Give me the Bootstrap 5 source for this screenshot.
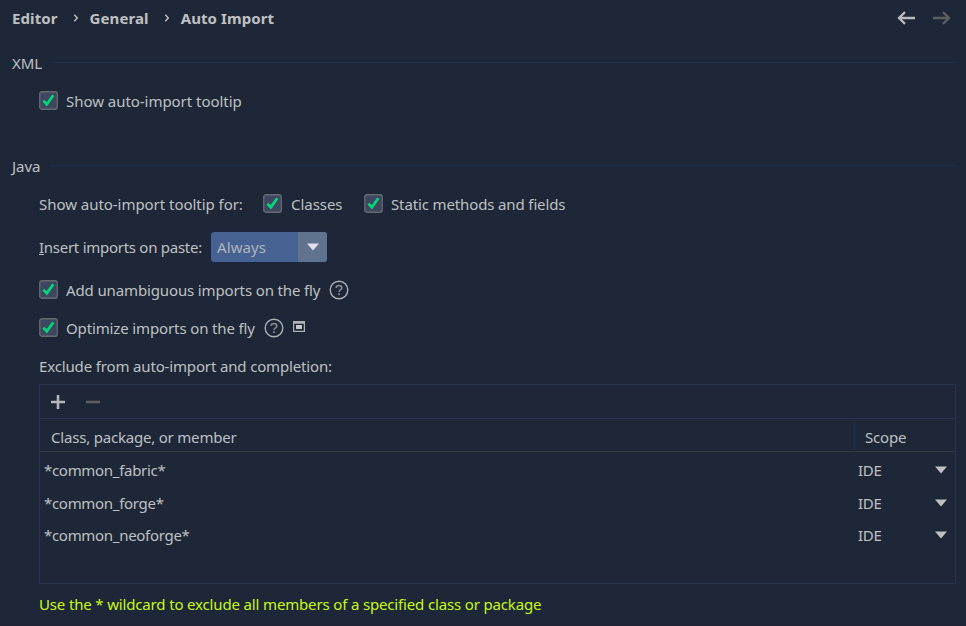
<!DOCTYPE html>
<html lang="en">
<head>
<meta charset="utf-8">
<meta name="viewport" content="width=device-width, initial-scale=1">
<title>Auto Import</title>
<link href="https://cdn.jsdelivr.net/npm/bootstrap@5.3.0/dist/css/bootstrap.min.css" rel="stylesheet">
<style>
body{background:#1e2738;color:#bfc0c1;font:15px/22px "Noto Sans","Open Sans",sans-serif;letter-spacing:-.13px;height:626px;overflow:hidden;border-bottom:1px solid #1b2132}
svg{display:block;flex:none}
.crumbs{height:36px;padding:0 15px 0 12px;font-weight:700;letter-spacing:.1px}
.crumbs .sep{margin:0 11px 0 15px}
.crumbs .fwd{margin-left:18px;color:#5d5e61}
.crumbs .back{color:#b9babb}
.section-title{height:22px;margin-top:16px;padding:0 10px 0 12px}
.section-title .rule{height:1px;background:#1d304c;margin-top:-2px}
.second{margin-top:43px}
.indent{margin:16px 0 0 39px;height:22px;white-space:nowrap}
.wide{letter-spacing:-.04px}
.tight{letter-spacing:-.27px}
.tick{width:19px;height:19px;margin:-2px 8px 0 0}
.combo{width:118px;height:32px;border:1px solid #1a2542;border-radius:4px;background:#466292;margin:-1px 0 0 7px;overflow:hidden;color:#b0b4ba}
.combo .arrow{width:29px;height:30px;background:#60738e}
.members{margin:7px 10px 0 39px;height:200px;border:1px solid #27344f}
.tools{height:34px;border-bottom:1px solid #27344f;padding-left:11px}
.heads{height:33px;border-bottom:1px solid #303842;padding-top:3px;letter-spacing:-.2px}
.heads .first{padding:4px 0 0 11px}
.heads .scope{width:101px;border-left:1px solid #1d304c;padding:5px 0 0 10px;height:28px;line-height:20px}
.entry{height:32.5px;padding:4px 8px 0 4px;letter-spacing:-.3px}
.entry .scope{width:77px}
.hint{color:#c8fa14;margin-top:9px;letter-spacing:-.155px}
</style>
<script src="https://cdn.jsdelivr.net/npm/bootstrap@5.3.0/dist/js/bootstrap.bundle.min.js"></script>
</head>
<body>
<svg width="0" height="0" class="position-absolute">
<symbol id="check" viewBox="0 0 19 19"><rect x=".75" y=".75" width="17.5" height="17.5" rx="2" fill="#3d475f" stroke="#666a70" stroke-width="1.3"/><path d="M4.4 9.6 7.8 13.3 14.3 4.3" fill="none" stroke="#00d97a" stroke-width="2.7"/></symbol>
<symbol id="help" viewBox="0 0 20 20"><circle cx="10" cy="10" r="8.8" fill="none" stroke="#aeb0b4" stroke-width="1.4"/><path d="M7.2 8C7.2 4.7 12.8 4.8 12.8 7.9 12.8 9.8 10 9.8 10 12" fill="none" stroke="#888b91" stroke-width="1.6"/><path d="M9.1 13.3h1.8v1.7H9.1z" fill="#888b91"/></symbol>
<symbol id="chev" viewBox="0 0 6 10"><path d="M1.3 1.7 4.3 5 1.3 8.3" fill="none" stroke="#bfc0c1" stroke-width="1.4"/></symbol>
<symbol id="down" viewBox="0 0 12 8"><path d="M0 .5h12L6 7.5z" fill="currentColor"/></symbol>
<symbol id="arrow" viewBox="0 0 18 14"><path d="M18 7H2M8 1.2 2 7l6 5.8" fill="none" stroke="currentColor" stroke-width="2.3"/></symbol>
</svg>
<header class="crumbs d-flex align-items-center">
<span>Editor</span><svg class="sep" width="6" height="10"><use href="#chev"/></svg><span>General</span><svg class="sep" width="6" height="10"><use href="#chev"/></svg><span>Auto Import</span>
<svg class="back ms-auto" width="18" height="14"><use href="#arrow"/></svg>
<svg class="fwd" width="18" height="14" viewBox="0 0 18 14"><path d="M0 7h16M10 1.2 16 7l-6 5.8" fill="none" stroke="currentColor" stroke-width="2.3"/></svg>
</header>
<main>
<div class="section-title d-flex align-items-center"><span style="width:39px">XML</span><div class="rule flex-grow-1"></div></div>
<label class="indent wide d-flex align-items-center"><svg class="tick"><use href="#check"/></svg><span>Show auto-import tooltip</span></label>
<div class="section-title second d-flex align-items-center"><span class="wide" style="width:38px">Java</span><div class="rule flex-grow-1"></div></div>
<div class="indent d-flex align-items-center"><span class="wide" style="width:224px">Show auto-import tooltip for:</span><svg class="tick"><use href="#check"/></svg><span class="wide" style="width:74px;padding-left:1px">Classes</span><svg class="tick"><use href="#check"/></svg><span>Static methods and fields</span></div>
<div class="indent d-flex align-items-center" style="margin-top:21px"><span class="tight" style="width:164px"><u>I</u>nsert imports on paste:</span><div class="combo d-flex align-items-center"><span class="flex-grow-1" style="padding:1px 0 0 6px;letter-spacing:.1px">Always</span><div class="arrow d-flex align-items-center justify-content-center"><svg width="12" height="8" style="color:#e3e0ec"><use href="#down"/></svg></div></div></div>
<div class="indent d-flex align-items-center" style="margin-top:21px"><svg class="tick"><use href="#check"/></svg><span style="width:263px">Add unambiguous imports on the fly</span><svg width="20" height="20"><use href="#help"/></svg></div>
<div class="indent d-flex align-items-center"><svg class="tick"><use href="#check"/></svg><span style="width:198px">Optimize imports on the fly</span><svg width="20" height="20"><use href="#help"/></svg><svg width="12" height="11" viewBox="0 0 12 11" style="margin:-3px 0 0 9px"><path d="M0 0h12v11H0zM1.2 2.8v7h9.6v-7z" fill="#aeb0b4" fill-rule="evenodd"/><path d="M3 4h6v4H3z" fill="#c5c6ca"/></svg></div>
<div class="indent d-flex align-items-center" style="letter-spacing:-.15px">Exclude from auto-import and completion:</div>
<section class="members">
<div class="tools d-flex align-items-center"><svg width="14" height="14" viewBox="0 0 14 14"><path d="M0 7h14M7 0v14" stroke="#b5b6b7" stroke-width="2.6"/></svg><svg width="14" height="14" viewBox="0 0 14 14" style="margin-left:21px"><path d="M0 7h14" stroke="#5d5e61" stroke-width="2.6"/></svg></div>
<div class="heads d-flex"><span class="first flex-grow-1">Class, package, or member</span><span class="scope">Scope</span></div>
<div class="entry d-flex align-items-center"><span class="flex-grow-1">*common_fabric*</span><span class="scope">IDE</span><svg width="12" height="8"><use href="#down"/></svg></div>
<div class="entry d-flex align-items-center"><span class="flex-grow-1">*common_forge*</span><span class="scope">IDE</span><svg width="12" height="8"><use href="#down"/></svg></div>
<div class="entry d-flex align-items-center"><span class="flex-grow-1">*common_neoforge*</span><span class="scope">IDE</span><svg width="12" height="8"><use href="#down"/></svg></div>
</section>
<div class="indent hint">Use the * wildcard to exclude all members of a specified class or package</div>
</main>
</body>
</html>
